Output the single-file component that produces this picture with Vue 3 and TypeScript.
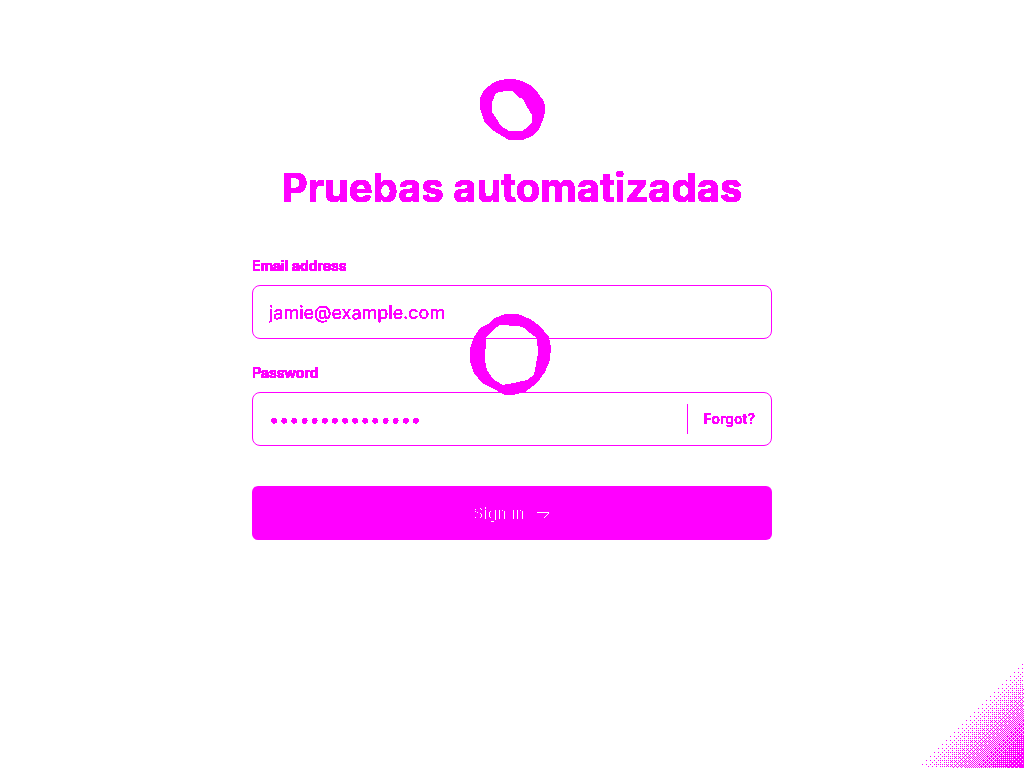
<script setup lang="ts">
import { ref } from 'vue'

const email = ref('jamie@example.com')
const password = ref('correcthorse123')

// Ordered 4x4 dither, fading out along the diagonal of the corner
const CORNER = 112
function threshold(x: number, y: number): number {
  let value = 0
  for (let bit = 0; bit < 2; bit++) {
    const bx = ((x + 2) >> bit) & 1
    const by = (y >> bit) & 1
    value = value * 4 + ((bx ^ by) * 2 + by)
  }
  return (value + 0.5) / 16
}

function buildDither(): string {
  const parts: string[] = []
  for (let y = 0; y < CORNER; y++) {
    for (let x = 0; x < CORNER; x++) {
      const density = (x + y - 112) / 112
      if (density > threshold(x, y)) parts.push(`M${x} ${y}h1v1h-1z`)
    }
  }
  return parts.join('')
}
const dither = buildDither()
</script>

<template>
  <main class="page">
    <svg class="defs" width="0" height="0" aria-hidden="true">
      <filter id="solid" x="-5%" y="-20%" width="110%" height="140%">
        <feComponentTransfer><feFuncA type="linear" slope="255" intercept="0" /></feComponentTransfer>
      </filter>
      <filter id="medium" x="-5%" y="-20%" width="110%" height="140%">
        <feComponentTransfer><feFuncA type="discrete" tableValues="0 0 1 1 1 1 1 1 1 1" /></feComponentTransfer>
      </filter>
      <filter id="thin" x="-5%" y="-20%" width="110%" height="140%">
        <feComponentTransfer><feFuncA type="linear" slope="255" intercept="-254" /></feComponentTransfer>
      </filter>
    </svg>

    <form class="login" @submit.prevent>
      <svg class="logo" width="68" height="64" viewBox="0 0 68 64" shape-rendering="crispEdges" aria-hidden="true">
        <path fill-rule="evenodd" d="M30 1L36 1L44 3L52 7L60 15L65 22L67 27V34L65 42L61 51L54 58L45 62H31L24 58L16 53L7 45L4 37L2 30V20L6 12L15 5L22 2ZM27 13H34L40 19L45 21L49 29L54 37V44L50 49L44 53H31L23 48L18 40L14 34V24L18 15Z" />
      </svg>
      <h1 class="title">Pruebas automatizadas</h1>

      <div class="field">
        <label class="label" for="email">Email address</label>
        <div class="box">
          <input id="email" v-model="email" class="input" type="email" autocomplete="off" />
        </div>
      </div>

      <div class="field">
        <label class="label" for="password">Password</label>
        <div class="box">
          <input id="password" v-model="password" class="input" type="password" autocomplete="off" />
          <a class="forgot" href="#forgot"><span class="forgot-text">Forgot?</span></a>
        </div>
      </div>

      <button class="submit" type="submit">
        <span class="submit-content">
          Sign in
          <svg width="14" height="12" viewBox="0 0 14 12" shape-rendering="crispEdges" aria-hidden="true">
            <path d="M0 5h12v1H0zM11 6h1v1h-1zM10 7h1v1h-1zM9 8h1v1h-1zM8 9h1v1h-1zM7 10h1v1h-1z" />
          </svg>
        </span>
      </button>
    </form>

    <svg class="ring" width="84" height="84" viewBox="0 0 84 84" shape-rendering="crispEdges" aria-hidden="true">
      <path fill-rule="evenodd" d="M36 2H49L61 7L71 14L80 25L82 35L81 48L76 60L68 71L56 80L44 83H36L21 75L13 71L5 61L1 50V36L5 25L11 16L19 12L26 6ZM31 13L49 14L55 16L61 21L68 26L69 41L65 63L58 68L49 70L34 73L24 67L18 58L16 48L17 26L24 18Z" />
    </svg>
    <svg class="corner" :width="CORNER" :height="CORNER" :viewBox="`0 0 ${CORNER} ${CORNER}`" shape-rendering="crispEdges" aria-hidden="true">
      <path :d="dither" />
    </svg>
  </main>
</template>

<style>
body {
  background: #fff;
}
</style>

<style scoped>
.page {
  --ink: #f0f;
  position: relative;
  box-sizing: border-box;
  min-height: 100vh;
  padding: 78px 24px 40px;
  overflow: hidden;
  background: #fff;
  color: var(--ink);
  font-family: Inter, "Liberation Sans", sans-serif;
}
.page svg {
  display: block;
  fill: var(--ink);
}
.page .defs {
  position: absolute;
}
.login {
  display: flex;
  flex-direction: column;
  width: 100%;
  max-width: 520px;
  margin: 0 auto;
}
.logo {
  align-self: center;
}
.title {
  margin: 20px 0 40px;
  font-size: 40px;
  line-height: 52px;
  font-weight: 700;
  text-align: center;
  white-space: nowrap;
  filter: url(#solid);
}
.field {
  margin-bottom: 22px;
}
.label {
  display: block;
  margin-bottom: 7px;
  font-size: 14px;
  line-height: 24px;
  font-weight: 600;
  filter: url(#solid);
}
.box {
  display: flex;
  align-items: center;
  box-sizing: border-box;
  height: 54px;
  border: 1px solid var(--ink);
  border-radius: 8px;
}
.input {
  flex: 1;
  min-width: 0;
  height: 100%;
  box-sizing: border-box;
  padding: 0 16px;
  border: 0;
  outline: 0;
  background: transparent;
  color: inherit;
  font: 400 18px/24px Inter, "Liberation Sans", sans-serif;
  filter: url(#medium);
}
.forgot {
  padding: 0 16px;
  border-left: 1px solid var(--ink);
  color: inherit;
  font-size: 14px;
  line-height: 30px;
  font-weight: 600;
  text-decoration: none;
}
.forgot-text {
  display: block;
  filter: url(#medium);
}
.submit {
  display: flex;
  align-items: center;
  justify-content: center;
  height: 54px;
  margin-top: 18px;
  padding: 0;
  border: 0;
  border-radius: 6px;
  background: var(--ink);
  color: #fff;
  font: 500 16px/24px Inter, "Liberation Sans", sans-serif;
}
.submit-content {
  display: flex;
  align-items: center;
  gap: 12px;
  filter: url(#thin);
}
.submit-content svg {
  fill: #fff;
}
.ring {
  position: absolute;
  top: 312px;
  left: 50%;
  margin-left: -43px;
}
.corner {
  position: absolute;
  right: 0;
  bottom: 0;
}
</style>
